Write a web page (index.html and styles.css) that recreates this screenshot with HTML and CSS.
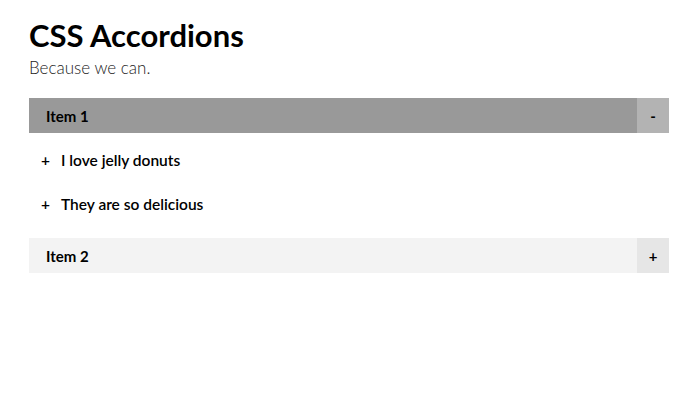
FILE: index.html
```html
<!DOCTYPE html>
<html lang="en">
<head>
  <meta charset="UTF-8">
  <title>CSS Accordions</title>
  <link rel="stylesheet" href="styles.css">
</head>
<body>
  <main class="wrap">
    <header>
      <h1>CSS Accordions</h1>
      <p class="sub">Because we can.</p>
    </header>
    <section class="accordion">
      <div class="item open">
        <div class="head">
          <span class="label">Item 1</span>
          <span class="toggle">-</span>
        </div>
        <ul class="body">
          <li><span class="plus">+</span>I love jelly donuts</li>
          <li><span class="plus">+</span>They are so delicious</li>
        </ul>
      </div>
      <div class="item">
        <div class="head">
          <span class="label">Item 2</span>
          <span class="toggle">+</span>
        </div>
      </div>
    </section>
  </main>
</body>
</html>
```

FILE: styles.css
```css
body {
  margin: 0;
  font-family: Lato, "Open Sans", sans-serif;
  color: #000;
  background: #fff;
}
.wrap {
  width: 640px;
  margin: 0 0 0 29px;
  padding-top: 16px;
}
h1 {
  margin: 0;
  font-size: 31px;
  font-weight: 700;
  line-height: 38px;
}
.sub {
  margin: 2px 0 18px 0;
  font-size: 17px;
  font-weight: 300;
  color: #222;
  line-height: 24px;
}
.head {
  display: flex;
  height: 35px;
  align-items: stretch;
  background: #f3f3f3;
  font-size: 15px;
  font-weight: 700;
}
.label {
  flex: 1;
  display: flex;
  align-items: center;
  padding-left: 17px;
}
.toggle {
  width: 32px;
  display: flex;
  align-items: center;
  justify-content: center;
  background: #e6e6e6;
}
.open .head {
  background: #999;
}
.open .toggle {
  background: #b3b3b3;
}
.body {
  list-style: none;
  margin: 0;
  padding: 5px 0 12px 12px;
}
.body li {
  height: 44px;
  line-height: 44px;
  font-size: 15.5px;
  font-weight: 600;
}
.plus {
  display: inline-block;
  width: 20px;
}
```
